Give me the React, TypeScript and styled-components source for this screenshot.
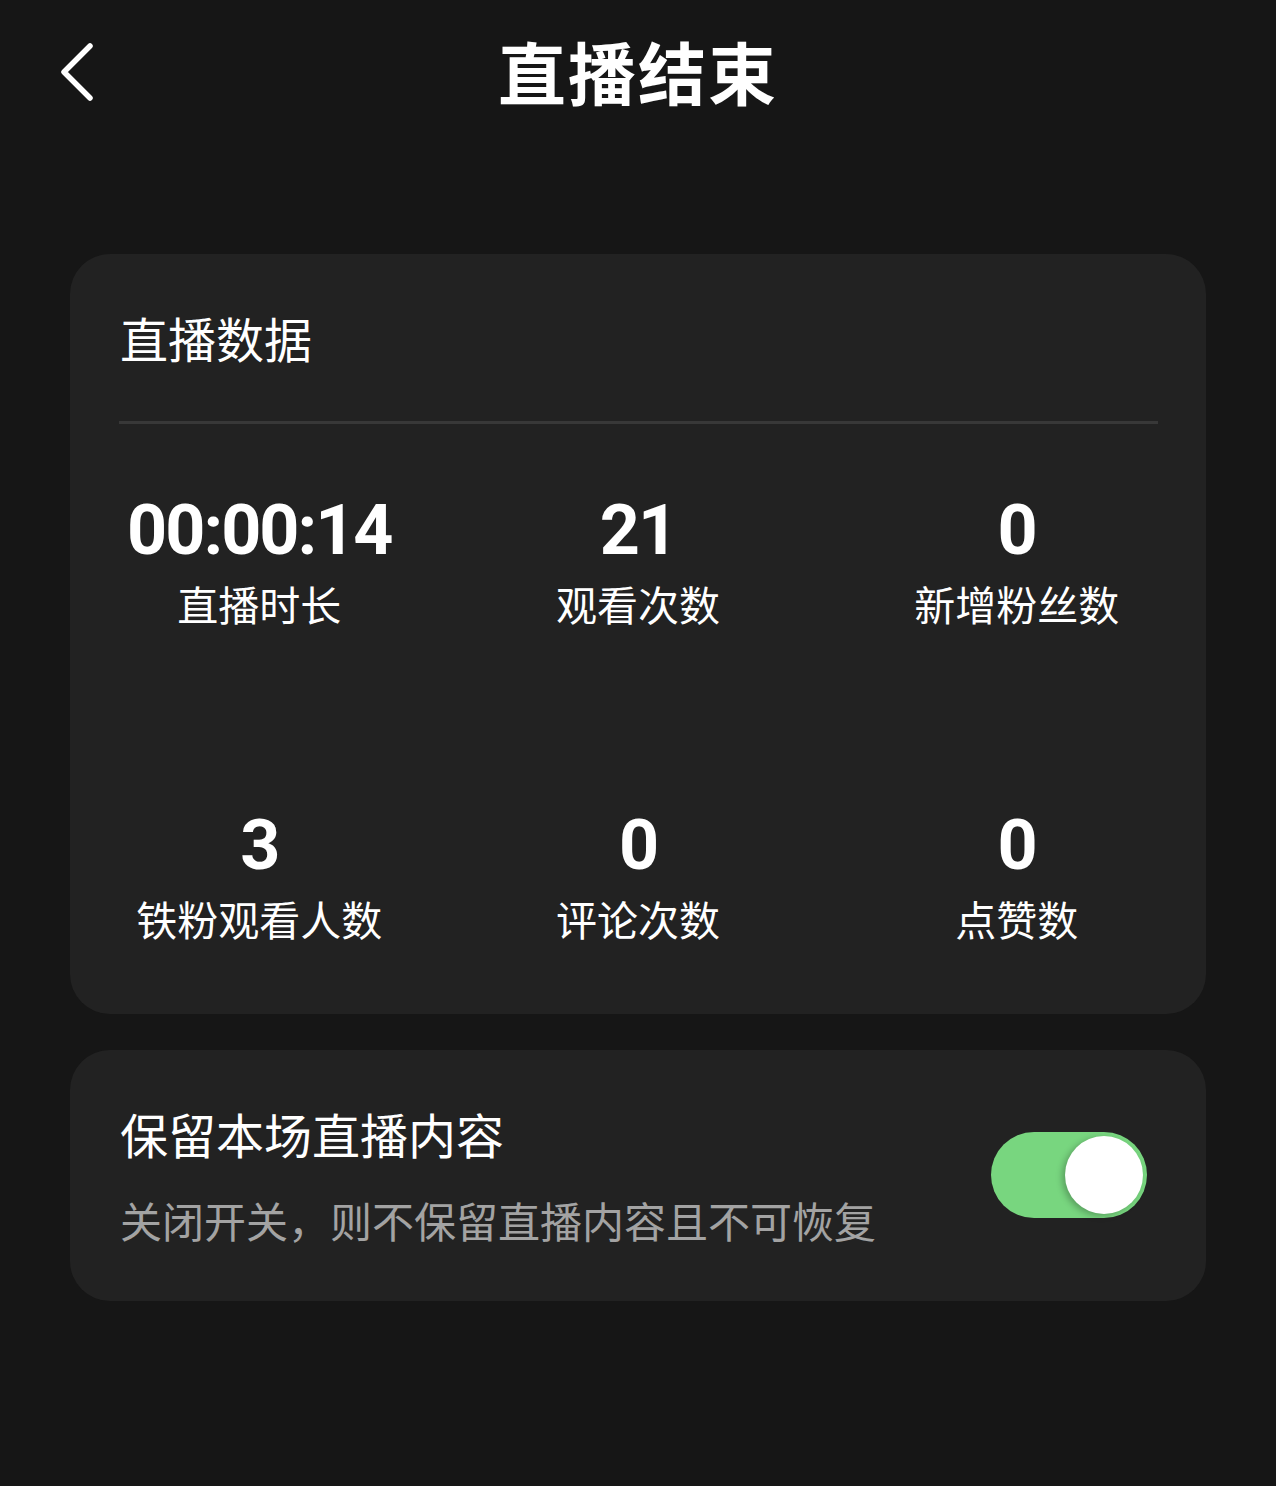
import React, { useState } from "react";
import styled, { createGlobalStyle } from "styled-components";

const GlobalStyle = createGlobalStyle`
  body {
    margin: 0;
    background: #161616;
    font-family: "Noto Sans CJK SC", "Noto Sans", sans-serif;
  }
`;

const Page = styled.div`
  min-height: 1486px;
  background: #161616;
  color: #fff;
  padding: 0 70px 0 70px;
  box-sizing: border-box;
`;

const Header = styled.header`
  height: 148px;
  display: grid;
  grid-template-columns: 1fr auto 1fr;
  align-items: center;
  margin: 0 -70px;
  padding: 0 54px;
`;

const BackButton = styled.button`
  justify-self: start;
  width: 44px;
  height: 64px;
  padding: 0;
  margin-top: -4px;
  border: none;
  background: transparent;
  display: flex;
  align-items: center;
  justify-content: center;
  cursor: pointer;
`;

const Title = styled.h1`
  margin: -6px 0 0 0;
  font-size: 68px;
  font-weight: 700;
  letter-spacing: 2px;
  line-height: 1;
`;

const Card = styled.section<{ $padTop?: number }>`
  background: #222222;
  border-radius: 40px;
  padding-top: ${(p) => p.$padTop ?? 0}px;
`;

const StatsCard = styled(Card)`
  margin-top: 106px;
  padding-bottom: 66px;
`;

const CardTitle = styled.h2`
  margin: 0 0 0 50px;
  font-size: 48px;
  font-weight: 400;
  line-height: 68px;
`;

const Divider = styled.hr`
  margin: 50px 48px 0 49px;
  border: none;
  height: 3px;
  background: #383838;
`;

const StatsGrid = styled.div`
  display: grid;
  grid-template-columns: repeat(3, 1fr);
  row-gap: 172px;
  padding-top: 66px;
`;

const Stat = styled.div`
  display: flex;
  flex-direction: column;
  align-items: center;
`;

const StatValue = styled.div`
  font-family: Roboto, "Noto Sans", sans-serif;
  font-size: 70px;
  font-weight: 700;
  letter-spacing: -2px;
  line-height: 80px;
`;

const StatLabel = styled.div`
  margin-top: 3px;
  font-size: 41px;
  line-height: 60px;
`;

const KeepCard = styled(Card)`
  margin-top: 36px;
  height: 251px;
  display: flex;
  align-items: center;
  justify-content: space-between;
  padding: 0 59px 0 50px;
  box-sizing: border-box;
`;

const KeepText = styled.div`
  display: flex;
  flex-direction: column;
  gap: 25px;
  margin-top: -1px;
`;

const KeepTitle = styled.div`
  font-size: 48px;
  line-height: 64px;
`;

const KeepHint = styled.div`
  font-size: 42px;
  line-height: 60px;
  color: #a3a3a3;
`;

const Switch = styled.button<{ $on: boolean }>`
  position: relative;
  width: 156px;
  height: 86px;
  border-radius: 43px;
  border: none;
  padding: 0;
  cursor: pointer;
  background: ${(p) => (p.$on ? "#78d67f" : "#555")};
  margin-top: -2px;

  &::after {
    content: "";
    position: absolute;
    top: 4px;
    left: ${(p) => (p.$on ? "74px" : "4px")};
    width: 78px;
    height: 78px;
    border-radius: 50%;
    background: #fff;
    box-shadow: -3px 2px 6px rgba(0, 0, 0, 0.25);
  }
`;

const stats = [
  { value: "00:00:14", label: "直播时长" },
  { value: "21", label: "观看次数" },
  { value: "0", label: "新增粉丝数" },
  { value: "3", label: "铁粉观看人数" },
  { value: "0", label: "评论次数" },
  { value: "0", label: "点赞数" },
];

export default function App() {
  const [keep, setKeep] = useState(true);

  return (
    <Page>
      <GlobalStyle />
      <Header>
        <BackButton aria-label="返回">
          <svg width="36" height="60" viewBox="0 0 36 60" fill="none">
            <path
              d="M32 4 L6 30 L32 56"
              stroke="#fff"
              strokeWidth="5.5"
              strokeLinecap="round"
              strokeLinejoin="round"
            />
          </svg>
        </BackButton>
        <Title>直播结束</Title>
        <div />
      </Header>

      <StatsCard $padTop={49}>
        <CardTitle>直播数据</CardTitle>
        <Divider />
        <StatsGrid>
          {stats.map((s, i) => (
            <Stat key={i}>
              <StatValue>{s.value}</StatValue>
              <StatLabel>{s.label}</StatLabel>
            </Stat>
          ))}
        </StatsGrid>
      </StatsCard>

      <KeepCard>
        <KeepText>
          <KeepTitle>保留本场直播内容</KeepTitle>
          <KeepHint>关闭开关，则不保留直播内容且不可恢复</KeepHint>
        </KeepText>
        <Switch $on={keep} onClick={() => setKeep(!keep)} aria-label="保留本场直播内容" />
      </KeepCard>
    </Page>
  );
}
